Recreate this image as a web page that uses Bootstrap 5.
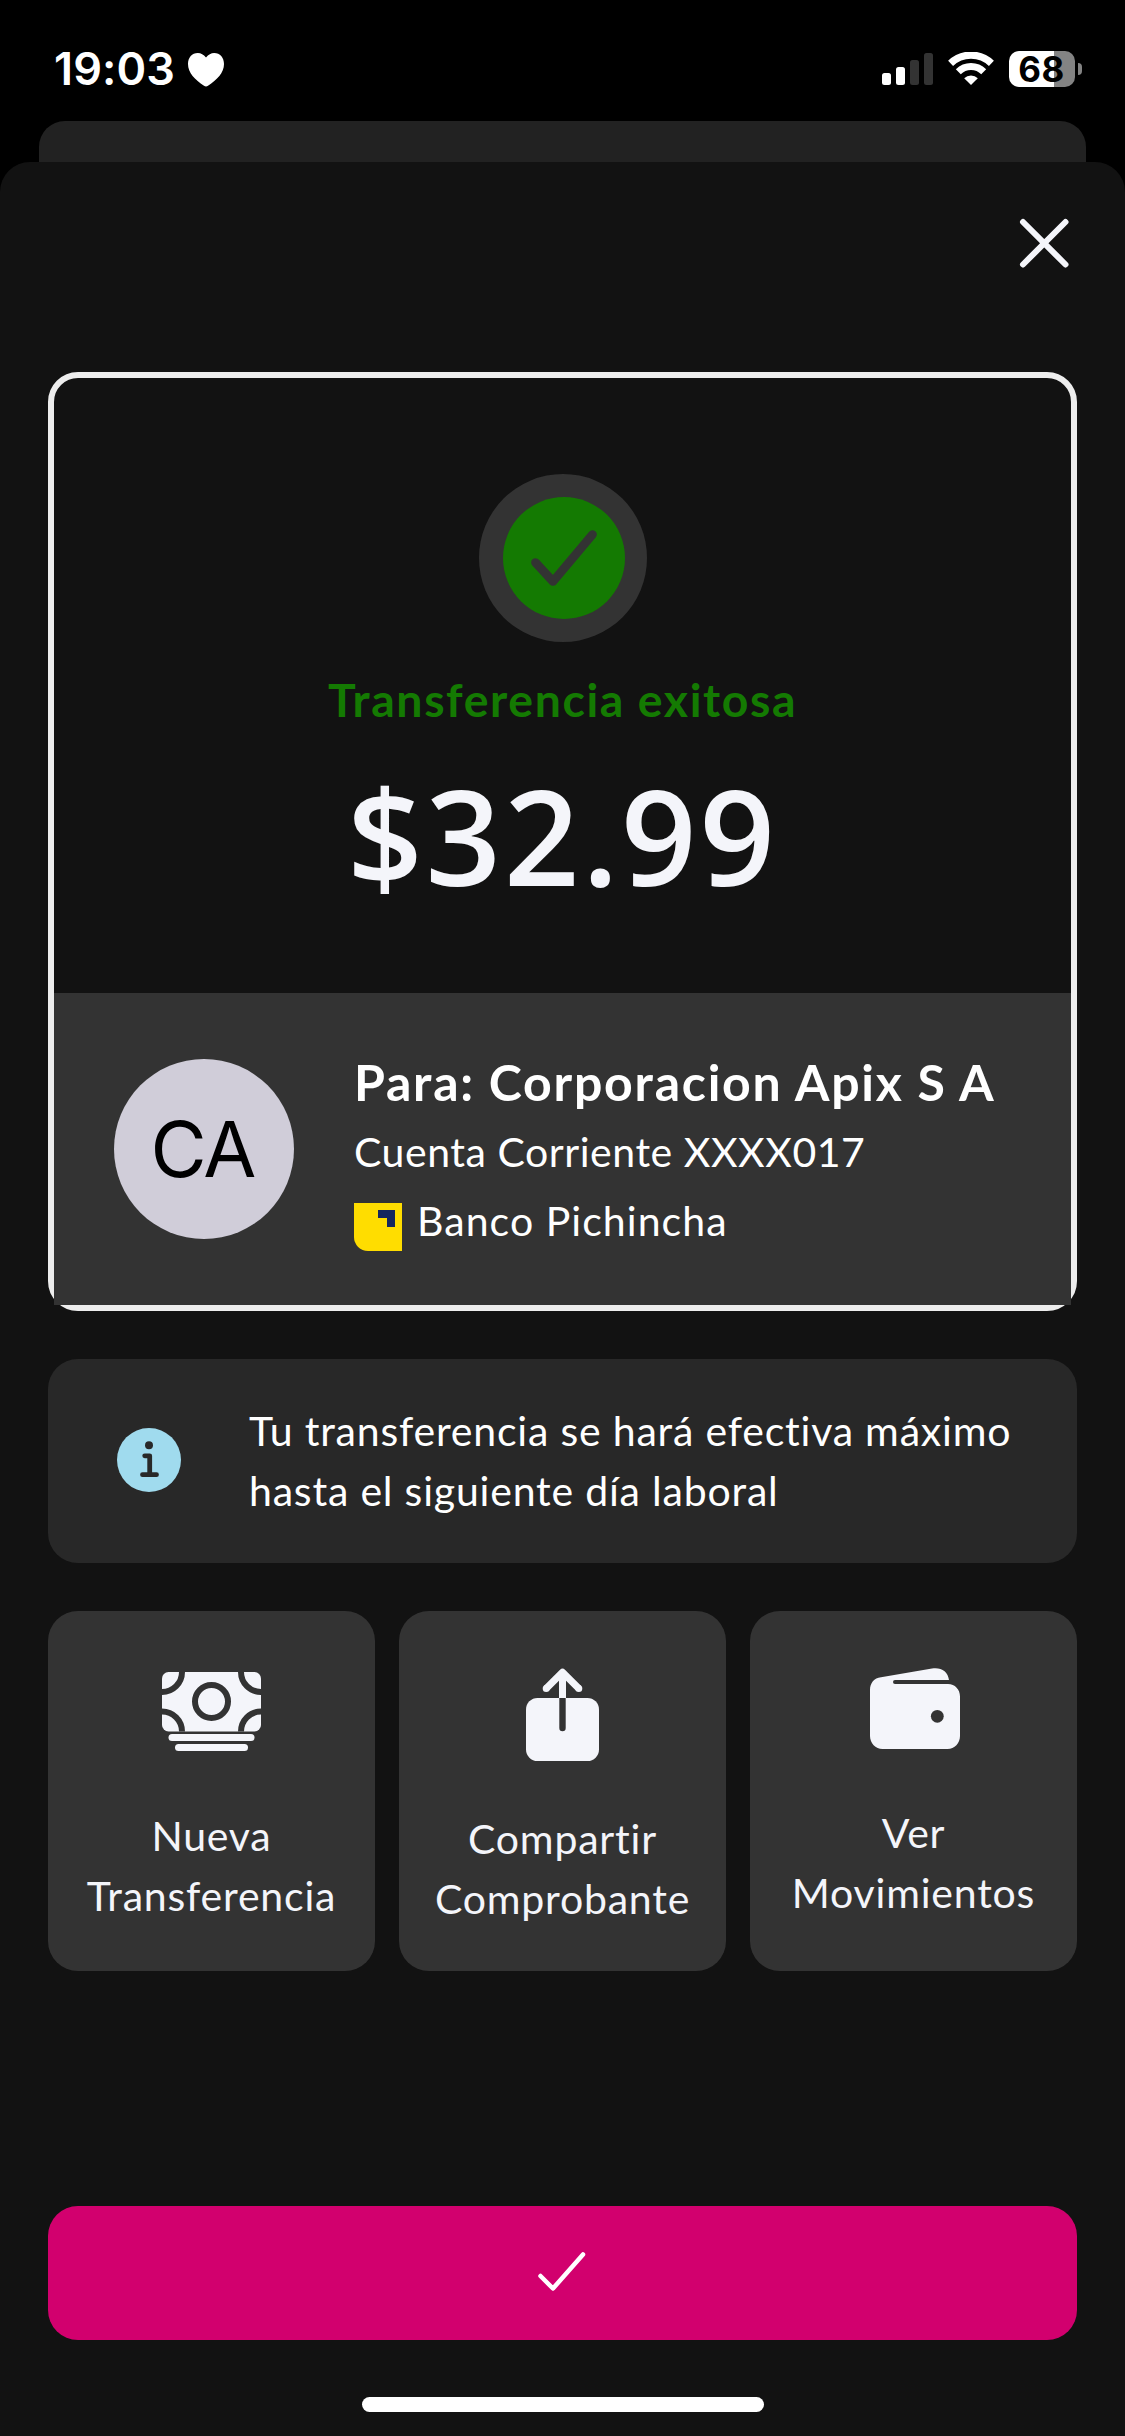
<!DOCTYPE html>
<html lang="es">
<head>
<meta charset="utf-8">
<meta name="viewport" content="width=device-width, initial-scale=1">
<title>Transferencia exitosa</title>
<link rel="stylesheet" href="https://cdn.jsdelivr.net/npm/bootstrap@5.3.0/dist/css/bootstrap.min.css">
<style>
  body { background: #000; color: #fff; font-family: Lato, "Open Sans", sans-serif; font-size: 41px; line-height: 60px; letter-spacing: .8px; }
  .screen { width: 1125px; height: 2436px; }
  svg { display: block; flex: none; }

  .statusbar { height: 121px; padding: 51px 43px 0 54px; font-family: Inter, sans-serif; }
  .clock { font-size: 45px; font-weight: 600; line-height: 36px; letter-spacing: .1px; }
  .heart { margin: 2px 0 0 13px; }
  .signal { margin: 2px 15px 0 0; }
  .wifi { margin: 1px 15px 0 0; }
  .battery { width: 66px; height: 36px; border-radius: 10px; color: #000; background: linear-gradient(90deg, #fff 45px, #838383 45px); font-size: 35px; font-weight: 700; line-height: 37px; letter-spacing: .5px; padding-right: 1px; }
  .nub { width: 4px; height: 12px; margin: 12px 0 0 3px; border-radius: 0 4px 4px 0; background: #838383; }

  .backsheet { height: 41px; margin: 0 39px; border-radius: 26px 26px 0 0; background: #222; }
  .sheet { background: #121212; border-radius: 30px 30px 0 0; padding: 0 48px; }
  .closebtn { margin: 55px 6px 103px 0; width: 54px; height: 52px; }

  .receipt { border: 6px solid #ededed; border-radius: 30px; height: 939px; }
  .receipt-top { height: 615px; padding-top: 96px; }
  .ok-title { color: #147a02; font-size: 46.4px; font-weight: 700; letter-spacing: 1.6px; margin: 27px 0 26px; }
  .amount { color: #f4f5fa; font-family: "Open Sans", sans-serif; font-size: 132px; font-weight: 600; line-height: 160px; letter-spacing: 2.8px; }
  .payee { background: #333; height: 312px; padding: 55px 60px 0; gap: 60px; }
  .avatar { width: 180px; height: 180px; margin-top: 11px; background: #d0cdd9; color: #000; font: 400 77px/180px Inter, sans-serif; letter-spacing: -2px; padding-right: 3px; }
  .payee-name { font-size: 50px; font-weight: 700; line-height: 68px; letter-spacing: 1.75px; margin-bottom: 4px; }
  .account { line-height: 64px; letter-spacing: .54px; margin-bottom: 2px; }
  .bank { line-height: 70px; letter-spacing: 1.06px; }
  .bank svg { margin: 17px 15px 0 0; }

  .notice { height: 204px; margin-top: 48px; border-radius: 30px; background: #282828; padding: 0 60px 0 69px; gap: 68px; }
  .notice svg { margin-top: -2px; }
  .actions { margin-top: 48px; gap: 24px; }
  .tile { height: 360px; border-radius: 30px; background: #333; color: #f4f5fa; padding-top: 57px; }
  .confirm { height: 134px; margin-top: 235px; border-radius: 30px; background: #d2006e; }
  .home { width: 402px; height: 15px; margin: 57px auto 0; background: #fff; }
</style>
<script src="https://cdn.jsdelivr.net/npm/bootstrap@5.3.0/dist/js/bootstrap.bundle.min.js"></script>
</head>
<body>
<div class="screen d-flex flex-column overflow-hidden">
  <header class="statusbar d-flex align-items-start flex-shrink-0">
    <div class="clock">19:03</div>
    <svg class="heart me-auto" width="36" height="34" viewBox="0 0 36 34" fill="#fff"><path d="M18 4.5C15.500 1.500 13 0 9.800 0 4 0 0 4.500 0 11c0 9 7 15.500 16 21.800q2 1.400 4 0C29 26.500 36 20 36 11 36 4.500 32 0 26.200 0 23 0 20.500 1.500 18 4.500z"/></svg>
    <svg class="signal" width="51" height="32" viewBox="0 0 51 32"><g fill="#fff"><rect y="20" width="9" height="12" rx="2.500"/><rect x="14" y="14" width="9" height="18" rx="2.500"/></g><g fill="#333"><rect x="28" y="7" width="9" height="25" rx="2.500"/><rect x="42" width="9" height="32" rx="2.500"/></g></svg>
    <svg class="wifi" width="46" height="33" viewBox="0 0 46 33" fill="none" stroke="#fff"><path d="M2.600 11.300a29.500 29.500 0 0 1 40.800 0" stroke-width="7.200"/><path d="M10.300 19.700a18 18 0 0 1 25.400 0" stroke-width="7"/><path d="M16.200 26.300a9.500 9.500 0 0 1 13.600 0L23 33z" fill="#fff" stroke="none"/></svg>
    <div class="battery text-center">68</div>
    <div class="nub"></div>
  </header>
  <div class="backsheet flex-shrink-0"></div>

  <main class="sheet flex-grow-1 d-flex flex-column">
    <svg class="closebtn align-self-end" viewBox="0 0 54 52" stroke="#f4f5fa" stroke-width="6" stroke-linecap="round"><path d="M6 5l42.500 42.500M48.500 5L6 47.500"/></svg>

    <section class="receipt flex-shrink-0">
      <div class="receipt-top d-flex flex-column align-items-center">
        <svg width="168" height="168" viewBox="0 0 168 168"><circle cx="84" cy="84" r="84" fill="#333"/><circle cx="85" cy="84" r="61" fill="#147a02"/><path d="M56.500 88.500L74 107.500l39.500-47" fill="none" stroke="#333" stroke-width="8.700" stroke-linecap="round" stroke-linejoin="round"/></svg>
        <div class="ok-title">Transferencia exitosa</div>
        <div class="amount">$32.99</div>
      </div>
      <div class="payee d-flex align-items-start">
        <div class="avatar rounded-circle text-center flex-shrink-0">CA</div>
        <div class="text-nowrap">
          <div class="payee-name">Para: Corporacion Apix S A</div>
          <div class="account">Cuenta Corriente XXXX017</div>
          <div class="bank d-flex align-items-start">
            <svg width="48" height="48" viewBox="0 0 48 48"><path d="M0 0h48v48H14A14 14 0 0 1 0 34z" fill="#fd0"/><path d="M24 7h17v17h-8v-9h-9z" fill="#14265e"/></svg>
            <span>Banco Pichincha</span>
          </div>
        </div>
      </div>
    </section>

    <section class="notice d-flex align-items-center flex-shrink-0">
      <svg width="64" height="64" viewBox="0 0 64 64"><circle cx="32" cy="32" r="32" fill="#a0dbee"/><g fill="none" stroke="#282828" stroke-width="4.800" stroke-linecap="round" stroke-linejoin="round"><path d="M27.700 27.800h5V46.500M25.500 46.700h14"/></g><circle cx="32" cy="17.300" r="4" fill="#282828"/></svg>
      <div class="text-nowrap">Tu transferencia se hará efectiva máximo<br>hasta el siguiente día laboral</div>
    </section>

    <section class="actions d-flex flex-shrink-0 text-center">
      <div class="tile flex-fill w-100">
        <svg class="mx-auto" width="99" height="138" viewBox="0 0 99 138">
          <defs><clipPath id="bill"><rect y="4" width="99" height="59.500" rx="6.500"/></clipPath></defs>
          <g clip-path="url(#bill)"><path d="M0 4h99v60H0z" fill="#f4f5fa"/><g fill="none" stroke="#333" stroke-width="6"><circle cx="0" cy="4" r="20"/><circle cx="99" cy="4" r="20"/><circle cx="0" cy="63.500" r="20"/><circle cx="99" cy="63.500" r="20"/><circle cx="49.500" cy="33.500" r="16.500"/></g></g>
          <g fill="#f4f5fa"><rect x="6.500" y="66" width="86" height="7" rx="3.500"/><rect x="13" y="76" width="73" height="7" rx="3.500"/></g>
        </svg>
        Nueva<br>Transferencia
      </div>
      <div class="tile flex-fill w-100">
        <svg class="mx-auto" width="73" height="141" viewBox="0 0 73 141">
          <rect y="30" width="73" height="63" rx="11.500" fill="#f4f5fa"/>
          <path d="M20.200 20.500L36.500 4.200l16.300 16.300M36.500 5v25" fill="none" stroke="#f4f5fa" stroke-width="7" stroke-linejoin="round"/><path d="M20.200 20.500h0M52.800 20.500h0" stroke="#f4f5fa" stroke-width="7" stroke-linecap="round"/>
          <path d="M33.300 30h6.400v30a3.200 3.200 0 0 1-6.400 0z" fill="#333"/>
        </svg>
        Compartir<br>Comprobante
      </div>
      <div class="tile flex-fill w-100">
        <svg class="mx-auto" width="93" height="135" viewBox="-3 0 93 135">
          <path d="M0 22C0 15 4 10 11 9.200L62 .5C71-1 78 3.500 79 12H25a2 2 0 0 0 0 4h53c7 0 12 5.500 12 12.500V68c0 7-5.500 13-12.500 13h-65C5.500 81 0 75 0 68z" fill="#f4f5fa"/><circle cx="67.300" cy="48.300" r="6.400" fill="#333"/>
        </svg>
        Ver<br>Movimientos
      </div>
    </section>

    <button type="button" class="confirm btn border-0 p-0 w-100 d-flex align-items-center justify-content-center flex-shrink-0" aria-label="Confirmar">
      <svg width="50" height="42" viewBox="0 0 50 42" fill="none" stroke="#fff" stroke-width="4.500" stroke-linecap="round" stroke-linejoin="round"><path d="M2.500 24L15 36.500l30-34"/></svg>
    </button>
    <div class="home rounded-pill flex-shrink-0"></div>
  </main>
</div>
</body>
</html>
